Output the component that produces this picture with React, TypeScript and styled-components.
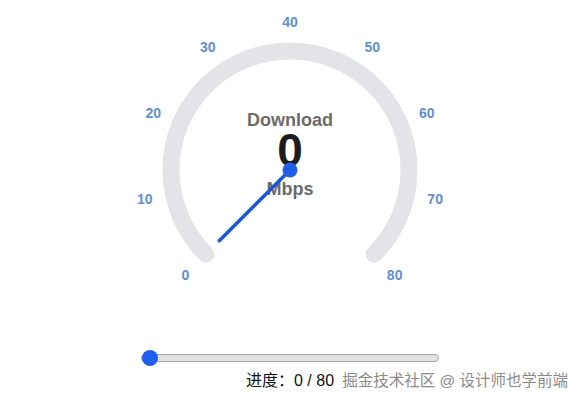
import React, { FC, useState } from 'react';
import styled, { createGlobalStyle } from 'styled-components';

const MAX = 80;
const STEP = 10;
const CX = 160;
const CY = 170;
const ARC_R = 119;
const LABEL_R = 148;
const NEEDLE_LEN = 100;
const SWEEP = 270;

const GlobalStyle = createGlobalStyle`
	html, body {
		margin: 0;
		padding: 0;
		background: #ffffff;
	}
	body {
		font-family: 'Liberation Sans', 'Noto Sans CJK SC', Arial, sans-serif;
	}
`;

// angle in degrees, measured clockwise from 12 o'clock
const polar = (r: number, deg: number) => {
	const rad = (deg * Math.PI) / 180;
	return { x: CX + r * Math.sin(rad), y: CY - r * Math.cos(rad) };
};

const valueToAngle = (v: number) => -SWEEP / 2 + (v / MAX) * SWEEP;

const Gauge: FC<{ value: number }> = ({ value }) => {
	const start = polar(ARC_R, -SWEEP / 2);
	const end = polar(ARC_R, SWEEP / 2);
	const tip = polar(NEEDLE_LEN, valueToAngle(value));
	const ticks = Array.from({ length: MAX / STEP + 1 }, (_, i) => i * STEP);

	return (
		<GaugeBox>
			<Readout>
				<Caption>Download</Caption>
				<Speed>{value}</Speed>
				<Unit>Mbps</Unit>
			</Readout>
			<Dial width={320} height={300} viewBox="0 0 320 300">
				<path
					d={`M ${start.x} ${start.y} A ${ARC_R} ${ARC_R} 0 1 1 ${end.x} ${end.y}`}
					fill="none"
					stroke="#e3e4e7"
					strokeWidth={17}
					strokeLinecap="round"
				/>
				{ticks.map((t) => {
					const p = polar(LABEL_R, valueToAngle(t));
					return (
						<TickLabel key={t} x={p.x} y={p.y} textAnchor="middle" dominantBaseline="central">
							{t}
						</TickLabel>
					);
				})}
				<line
					x1={CX}
					y1={CY}
					x2={tip.x}
					y2={tip.y}
					stroke="#1a56d6"
					strokeWidth={3.5}
					strokeLinecap="round"
				/>
				<circle cx={CX} cy={CY} r={7.5} fill="#1f5fea" />
			</Dial>
		</GaugeBox>
	);
};

const App: FC = () => {
	const [value, setValue] = useState(0);

	return (
		<Page>
			<GlobalStyle />
			<Gauge value={value} />
			<Range
				type="range"
				min={0}
				max={MAX}
				value={value}
				onChange={(e) => setValue(Number(e.target.value))}
			/>
			<Progress>
				进度：{value} / {MAX}
			</Progress>
			<Watermark>掘金技术社区 @ 设计师也学前端</Watermark>
		</Page>
	);
};

const Page = styled.div`
	position: relative;
	width: 580px;
	height: 404px;
	display: flex;
	flex-direction: column;
	align-items: center;
	overflow: hidden;
`;

const GaugeBox = styled.div`
	position: relative;
	width: 320px;
	height: 300px;
`;

const Dial = styled.svg`
	position: relative;
	z-index: 1;
	display: block;
`;

const TickLabel = styled.text`
	font-family: 'Liberation Sans', Arial, sans-serif;
	font-size: 14px;
	font-weight: 700;
	fill: #608fd2;
`;

const Readout = styled.div`
	position: absolute;
	top: 110px;
	left: 0;
	right: 0;
	display: flex;
	flex-direction: column;
	align-items: center;
	font-weight: 700;
`;

const Caption = styled.div`
	font-size: 18px;
	line-height: 20px;
	color: #6b6b6b;
`;

const Speed = styled.div`
	margin-top: 2px;
	font-size: 46px;
	line-height: 36px;
	color: #1c1c1c;
`;

const Unit = styled(Caption)`
	margin-top: 11px;
`;

const Range = styled.input`
	appearance: none;
	-webkit-appearance: none;
	margin: 50px 0 0;
	width: 298px;
	height: 16px;
	background: transparent;

	&::-webkit-slider-runnable-track {
		height: 8px;
		border-radius: 4px;
		background: #e2e2e2;
		border: 1px solid #a9a9a9;
		box-sizing: border-box;
	}
	&::-webkit-slider-thumb {
		-webkit-appearance: none;
		width: 16px;
		height: 16px;
		margin-top: -5px;
		border-radius: 50%;
		background: #1f5fea;
		border: none;
	}
`;

const Progress = styled.div`
	margin-top: 5px;
	font-size: 16px;
	line-height: 20px;
	color: #111;
`;

const Watermark = styled.div`
	position: absolute;
	right: 12px;
	bottom: 13px;
	font-size: 15.5px;
	line-height: 20px;
	color: #8a8a8a;
`;

export default App;
